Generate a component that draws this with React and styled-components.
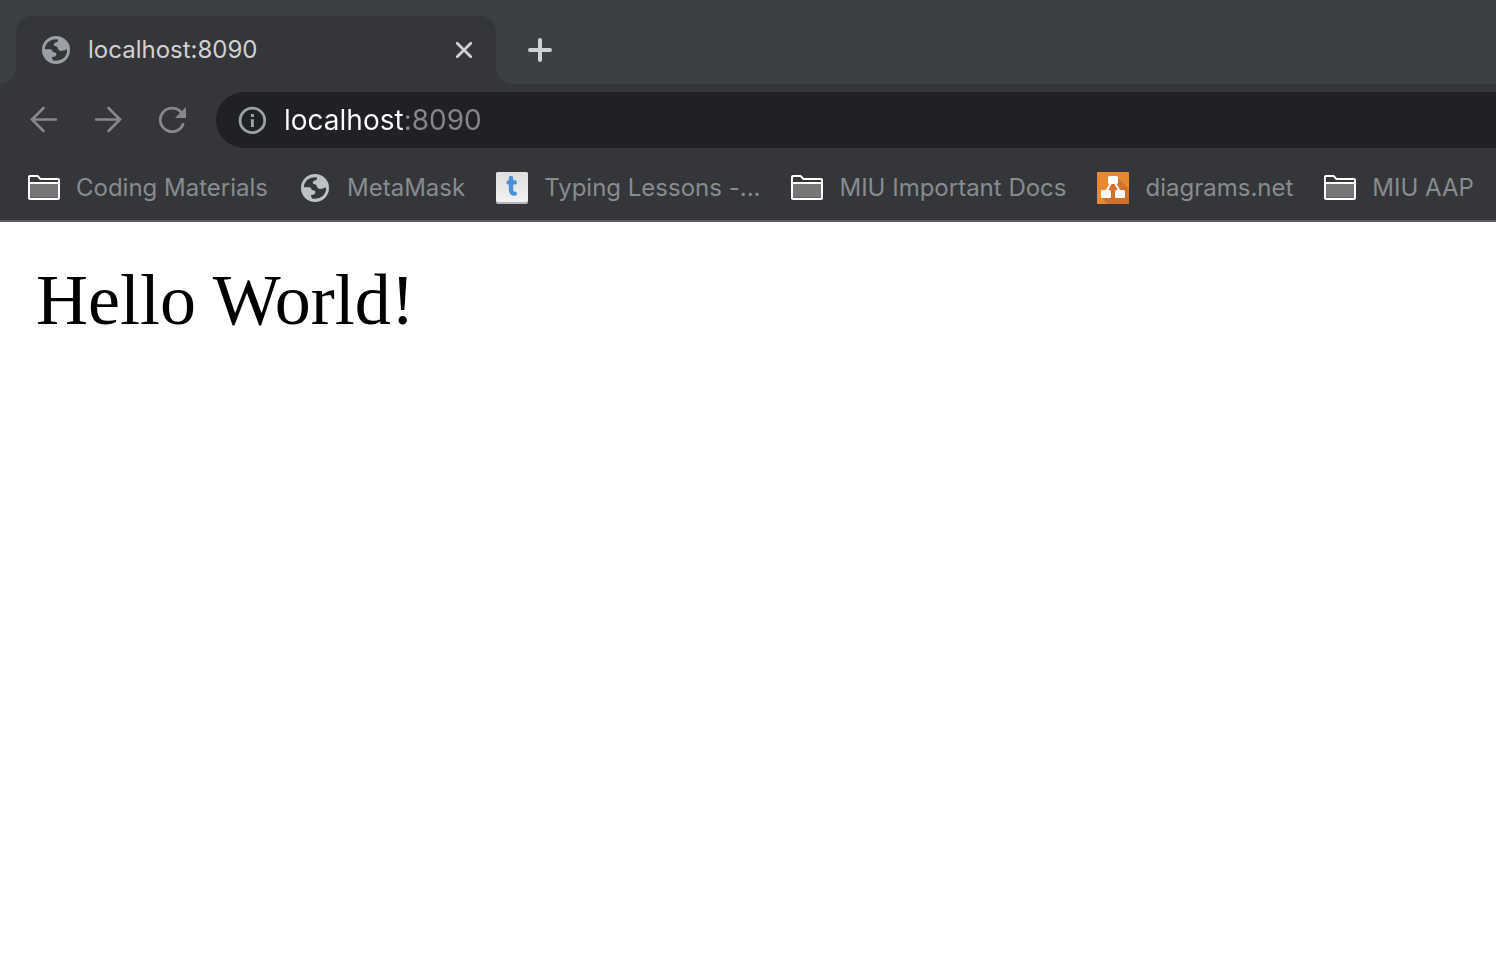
import React from "react";
import styled, { createGlobalStyle } from "styled-components";

const GlobalStyle = createGlobalStyle`
  * { box-sizing: border-box; }
  body { margin: 0; background: #ffffff; }
`;

const Browser = styled.div`
  min-height: 100vh;
  display: flex;
  flex-direction: column;
  overflow: hidden;
  font-family: Inter, "Liberation Sans", sans-serif;
`;

const TabStrip = styled.header`
  display: flex;
  align-items: flex-end;
  height: 84px;
  padding: 16px 16px 0;
  background: #3c4043;
`;

const Tab = styled.div`
  position: relative;
  display: flex;
  align-items: center;
  gap: 16px;
  width: 480px;
  height: 68px;
  padding: 0 16px 0 24px;
  border-radius: 16px 16px 0 0;
  background: #35363a;
  color: #d0d1d3;

  &::before,
  &::after {
    content: "";
    position: absolute;
    bottom: 0;
    width: 16px;
    height: 16px;
  }
  &::before {
    right: 100%;
    background: radial-gradient(circle at 0 0, transparent 15px, #35363a 16px);
  }
  &::after {
    left: 100%;
    background: radial-gradient(circle at 100% 0, transparent 15px, #35363a 16px);
  }
`;

const TabTitle = styled.span`
  flex: 1;
  font-size: 24px;
  line-height: 32px;
`;

const IconButton = styled.button`
  display: flex;
  align-items: center;
  justify-content: center;
  width: ${(p) => p.$size}px;
  height: ${(p) => p.$size}px;
  padding: 0;
  border: 0;
  background: none;
  color: ${(p) => p.$color};
`;

const NewTabSlot = styled.div`
  display: flex;
  align-items: center;
  height: 68px;
  padding-left: 28px;
`;

const Toolbar = styled.nav`
  display: flex;
  align-items: center;
  height: 72px;
  padding-left: 12px;
  background: #35363a;
`;

const AddressBar = styled.form`
  flex: 1;
  display: flex;
  align-items: center;
  gap: 16px;
  height: 56px;
  margin-left: 12px;
  padding-left: 20px;
  border-radius: 28px 0 0 28px;
  background: #202124;
  color: #9aa0a6;
`;

/* The host part of the address is white, the port after it is dimmed. */
const AddressInput = styled.input`
  flex: 1;
  min-width: 0;
  height: 56px;
  padding: 0;
  border: 0;
  outline: none;
  background: linear-gradient(to right, #ffffff 120px, #85878a 120px);
  background-clip: text;
  -webkit-background-clip: text;
  color: transparent;
  caret-color: #ffffff;
  font-family: inherit;
  font-size: 28px;
  line-height: 36px;
`;

const BookmarkBar = styled.nav`
  display: flex;
  align-items: center;
  gap: 31px;
  height: 66px;
  padding-left: 28px;
  border-bottom: 2px solid #5d5c61;
  background: #35363a;
`;

const Bookmark = styled.a`
  flex: none;
  display: flex;
  align-items: center;
  gap: 16px;
  color: #878c8f;
  font-size: 24px;
  line-height: 32px;
  white-space: nowrap;
  text-decoration: none;
`;

const Page = styled.main`
  flex: 1;
  padding: 36px;
  background: #ffffff;
`;

const Greeting = styled.p`
  margin: 0;
  color: #000000;
  font-family: "Liberation Serif", "Times New Roman", serif;
  font-size: 72px;
  line-height: 84px;
`;

const Icon = styled.svg`
  display: block;
  flex: none;
`;

function Globe({ color }) {
  return (
    <Icon width="32" height="32" viewBox="0 0 32 32" aria-hidden="true">
      <path
        fill={color}
        fillRule="evenodd"
        d="M16 2A14 14 0 1 1 16 30A14 14 0 1 1 16 2Z
           M4.8 15.2Q5 10.6 8.8 7.6Q12.4 5 17.8 5.4Q18.8 7.4 17 8Q14 8.4 13.6 10.8Q13.6 12.2 16 12.2Q17.8 12.6 17.8 14.6Q18.6 17 21 17Q23.8 17 27 15.2Q27.4 20.6 23.8 24Q19.4 27.6 13.2 26.6Q12 25.6 12 23Q15.6 23.2 16.4 21Q16.8 18.8 15 18.4L12.8 18Q12.2 15.4 10.6 15.2Z"
      />
    </Icon>
  );
}

function Folder() {
  return (
    <Icon width="32" height="26" viewBox="0 0 32 26" aria-hidden="true">
      <path fill="#747678" d="M1 8H31V24H1Z" />
      <path fill="#626467" d="M2 22H30V24H2Z" />
      <path
        fill="none"
        stroke="#ffffff"
        strokeWidth="2"
        strokeLinejoin="round"
        d="M1 24V2Q1 1 2 1H9.5L12.5 4H30Q31 4 31 5V23Q31 24 30 24H2Q1 24 1 23M1 8H31"
      />
    </Icon>
  );
}

function TypingLogo() {
  return (
    <Icon width="32" height="32" viewBox="0 0 32 32" aria-hidden="true">
      <defs>
        <linearGradient id="keycap" x1="0" y1="0" x2="0" y2="1">
          <stop offset="0" stopColor="#dedede" />
          <stop offset="1" stopColor="#f2f2f2" />
        </linearGradient>
      </defs>
      <rect width="32" height="32" rx="2" fill="#b5b7b8" />
      <rect width="32" height="30" rx="2" fill="url(#keycap)" />
      <path
        fill="none"
        stroke="#4a90d9"
        strokeWidth="4.4"
        strokeLinecap="round"
        strokeLinejoin="round"
        d="M15 6V17.5Q15 21.8 18.8 21.6M12.6 10.4H18.8"
      />
    </Icon>
  );
}

function DiagramsLogo() {
  return (
    <Icon width="32" height="32" viewBox="0 0 32 32" aria-hidden="true">
      <rect width="32" height="32" rx="1" fill="#e58a2f" />
      <path fill="#d3702b" d="M20 5L32 17V31Q32 32 31 32H11L5 26L14 12Z" />
      <path fill="none" stroke="#ffffff" strokeWidth="2" d="M14.5 10L9 20M17.5 10L23 20" />
      <g fill="#ffffff">
        <rect x="11" y="4" width="10" height="8" rx="1.5" />
        <rect x="4" y="18" width="10" height="8" rx="1.5" />
        <rect x="18" y="18" width="10" height="8" rx="1.5" />
      </g>
    </Icon>
  );
}

const bookmarks = [
  { label: "Coding Materials", icon: <Folder /> },
  { label: "MetaMask", icon: <Globe color="#bdc1c6" /> },
  { label: "Typing Lessons -...", icon: <TypingLogo /> },
  { label: "MIU Important Docs", icon: <Folder /> },
  { label: "diagrams.net", icon: <DiagramsLogo /> },
  { label: "MIU AAP", icon: <Folder /> },
];

export default function App() {
  return (
    <Browser>
      <GlobalStyle />
      <TabStrip>
        <Tab>
          <Globe color="#9aa0a6" />
          <TabTitle>localhost:8090</TabTitle>
          <IconButton type="button" $size={32} $color="#d0d1d3" aria-label="Close tab">
            <Icon width="32" height="32" viewBox="0 0 32 32">
              <path d="M9.2 9.2L22.8 22.8M22.8 9.2L9.2 22.8" stroke="currentColor" strokeWidth="2.8" strokeLinecap="round" />
            </Icon>
          </IconButton>
        </Tab>
        <NewTabSlot>
          <IconButton type="button" $size={32} $color="#d0d1d3" aria-label="New tab">
            <Icon width="32" height="32" viewBox="0 0 32 32">
              <path d="M16 6V26M6 16H26" stroke="currentColor" strokeWidth="4" strokeLinecap="round" />
            </Icon>
          </IconButton>
        </NewTabSlot>
      </TabStrip>
      <Toolbar aria-label="Navigation">
        <IconButton type="button" $size={64} $color="#87888a" aria-label="Back">
          <Icon width="32" height="32" viewBox="0 0 32 32" fill="none">
            <path d="M28 15.5H4.5M15.5 4L4 15.5L15.5 27" stroke="currentColor" strokeWidth="2.6" strokeLinecap="round" />
          </Icon>
        </IconButton>
        <IconButton type="button" $size={64} $color="#87888a" aria-label="Forward">
          <Icon width="32" height="32" viewBox="0 0 32 32" fill="none">
            <path d="M4 15.5H27.5M16.5 4L28 15.5L16.5 27" stroke="currentColor" strokeWidth="2.6" strokeLinecap="round" />
          </Icon>
        </IconButton>
        <IconButton type="button" $size={64} $color="#87888a" aria-label="Reload">
          <Icon width="32" height="32" viewBox="0 0 32 32" fill="none">
            <path d="M27 20.4A11.8 11.8 0 1 1 24.6 7.7" stroke="currentColor" strokeWidth="2.8" strokeLinecap="round" />
            <path d="M30 3V14H19Z" fill="currentColor" />
          </Icon>
        </IconButton>
        <AddressBar>
          <Icon width="32" height="32" viewBox="0 0 32 32" fill="none" aria-hidden="true">
            <circle cx="16.4" cy="16.4" r="12.3" stroke="currentColor" strokeWidth="2.8" />
            <path d="M16.4 10V13M16.4 15.2V23" stroke="currentColor" strokeWidth="3" />
          </Icon>
          <AddressInput type="text" aria-label="Address" defaultValue="localhost:8090" spellCheck={false} />
        </AddressBar>
      </Toolbar>
      <BookmarkBar aria-label="Bookmarks">
        {bookmarks.map((item) => (
          <Bookmark href="#" key={item.label}>
            {item.icon}
            <span>{item.label}</span>
          </Bookmark>
        ))}
      </BookmarkBar>
      <Page>
        <Greeting>Hello World!</Greeting>
      </Page>
    </Browser>
  );
}
